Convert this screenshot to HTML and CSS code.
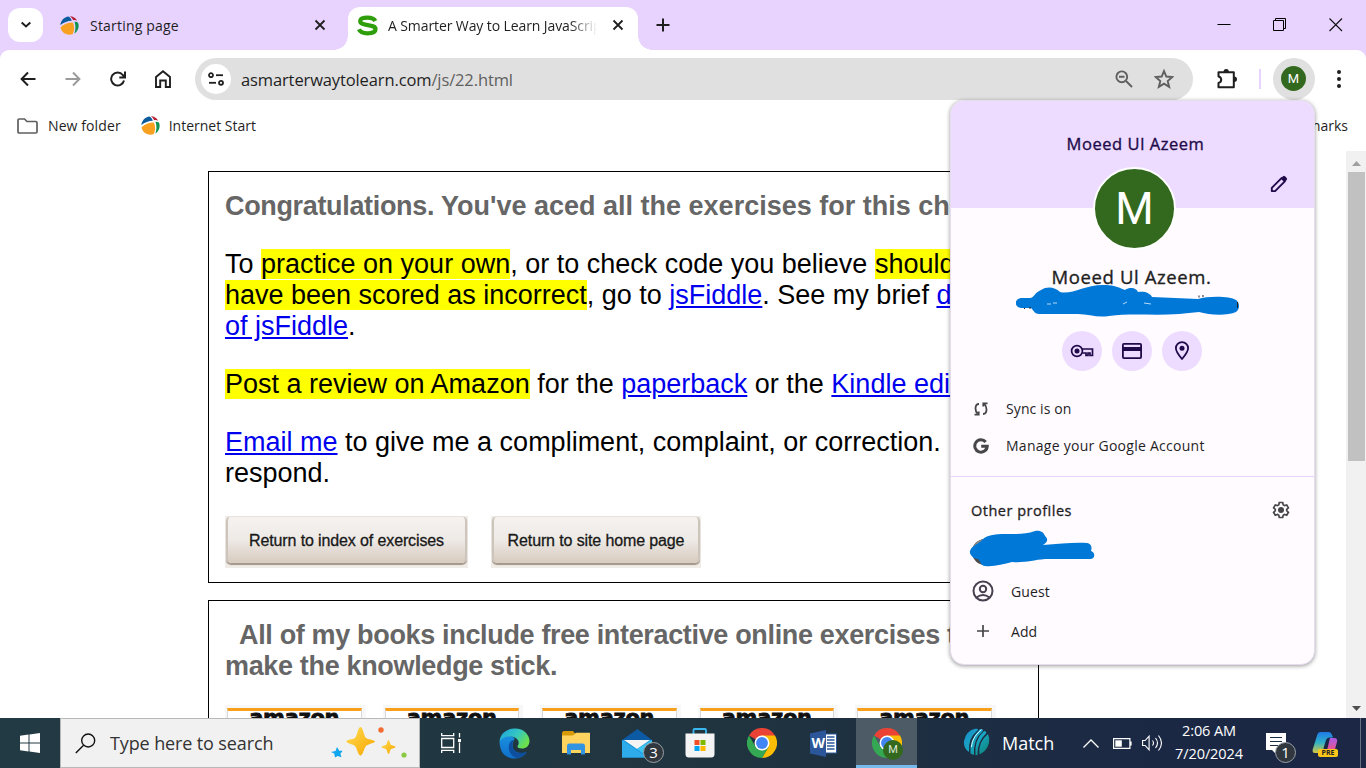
FILE: index.html
```html
<!DOCTYPE html>
<html lang="en">
<head>
<meta charset="utf-8">
<title>A Smarter Way to Learn JavaScript</title>
<link rel="stylesheet" href="styles.css">
</head>
<body>
<svg class="defs" width="0" height="0">
  <defs>
    <symbol id="ball" viewBox="0 0 18 18">
      <path fill="#0b5c9c" d="M.4 8.600C.6 4.500 4 .8 8 .4c1.700.9 2.700 2.200 3.200 4.200C7.500 4.700 3.500 6.300.4 8.600z"/>
      <path fill="#b81f35" d="M9.300.200c3 .1 5.500 1.600 7 4.200-1.300-.7-2.600-.8-3.900-.4C11.900 2.500 10.700 1.200 9.300.2z"/>
      <path fill="#0f9351" d="M13.700 5.500c1.300-.2 2.500.1 3.400.9 1.500 4-.2 8-3.500 10.200C14.900 13 15 9 13.700 5.500z"/>
      <path fill="#f8a01f" d="M.5 10.700C3.500 7.500 7.800 6 12.200 6.100c1.700 3.900 1.500 7.700-.3 11.200C6 19 1.300 15.600.5 10.700z"/>
    </symbol>
    <symbol id="chrome" viewBox="0 0 48 48">
      <path fill="#ea4335" d="M24 24 3.200 12A24 24 0 0 1 44.800 12z"/>
      <path fill="#fbbc04" d="M24 24V12h20.800A24 24 0 0 1 24 48L34.400 30z"/>
      <path fill="#34a853" d="M24 24 34.400 30 24 48A24 24 0 0 1 3.200 12L13.600 30z"/>
      <circle cx="24" cy="24" r="12" fill="#fff"/>
      <circle cx="24" cy="24" r="9.500" fill="#4285f4"/>
    </symbol>
    <linearGradient id="edgeA" x1="0" y1="0" x2="1" y2=".5"><stop offset="0" stop-color="#1ba1e2"/><stop offset=".6" stop-color="#36c8c0"/><stop offset="1" stop-color="#6be04c"/></linearGradient>
    <linearGradient id="edgeB" x1="0" y1="0" x2="0" y2="1"><stop offset="0" stop-color="#1a8fe0"/><stop offset="1" stop-color="#0f6fc9"/></linearGradient>
    <linearGradient id="gold" x1="0" y1="0" x2="1" y2="1"><stop offset="0" stop-color="#ffdc52"/><stop offset="1" stop-color="#f7a600"/></linearGradient>
    <linearGradient id="copA" x1="0" y1="0" x2="0" y2="1"><stop offset="0" stop-color="#1f78e8"/><stop offset=".5" stop-color="#2fb1c8"/><stop offset="1" stop-color="#d8c840"/></linearGradient>
    <linearGradient id="copB" x1="0" y1="0" x2="0" y2="1"><stop offset="0" stop-color="#a55de8"/><stop offset=".6" stop-color="#e0569c"/><stop offset="1" stop-color="#f79052"/></linearGradient>
    <linearGradient id="icc" x1="0" y1="0" x2="1" y2="1"><stop offset="0" stop-color="#1b8fd0"/><stop offset=".5" stop-color="#18a5c0"/><stop offset="1" stop-color="#0a7f6a"/></linearGradient>
  </defs>
</svg>

<div class="screen">
  <header class="tabstrip">
    <button class="tab-search"><svg width="12" height="8" viewBox="0 0 12 8"><path d="m1.700 1.500 4.300 4 4.300-4" fill="none" stroke="#1f1f1f" stroke-width="2"/></svg></button>
    <div class="tab tab-idle">
      <svg width="19" height="19"><use href="#ball"/></svg>
      <span class="ui tab-title">Starting page</span>
      <svg class="close" width="12" height="12" viewBox="0 0 12 12"><path d="m1.500 1.500 9 9m0-9-9 9" stroke="#1f1f1f" stroke-width="1.800"/></svg>
    </div>
    <div class="tab tab-active">
      <svg width="21" height="21" viewBox="0 0 21 21"><path d="M18.300 6C17 3.500 14 2.600 10.500 2.600 6 2.600 3.300 3.600 3.300 6.200c0 5.300 15.200 2.300 15.200 7.800 0 3-3.500 4.300-8 4.300-4.700 0-7.500-1.300-8.500-4" fill="none" stroke="#2f9e0b" stroke-width="4.300"/></svg>
      <span class="ui tab-title faded">A Smarter Way to Learn JavaScript</span>
      <svg class="close" width="12" height="12" viewBox="0 0 12 12"><path d="m1.500 1.500 9 9m0-9-9 9" stroke="#1f1f1f" stroke-width="1.800"/></svg>
    </div>
    <svg class="newtab" width="14" height="14" viewBox="0 0 14 14"><path d="M7 .5v13M.5 7h13" stroke="#1f1f1f" stroke-width="2"/></svg>
    <div class="window-controls">
      <svg width="14" height="14" viewBox="0 0 14 14"><path d="M.5 6.500h13" stroke="#000"/></svg>
      <svg width="14" height="14" viewBox="0 0 14 14"><path d="M.5 2.500h10v10H.5zM2.500 2.500v-2h10v10h-2" fill="none" stroke="#000"/></svg>
      <svg width="14" height="14" viewBox="0 0 14 14"><path d="m.5.5 12.500 12.500m0-12.500L.5 13" stroke="#111" stroke-width="1.100"/></svg>
    </div>
  </header>

  <nav class="toolbar">
    <div class="nav-icons">
      <svg width="16" height="16" viewBox="0 0 16 16"><path d="M15.500 8H2M8 1.500 1.600 8 8 14.500" fill="none" stroke="#1f1f1f" stroke-width="2"/></svg>
      <svg width="16" height="16" viewBox="0 0 16 16"><path d="M.5 8H14M8 1.500 14.400 8 8 14.500" fill="none" stroke="#9b9b9b" stroke-width="2"/></svg>
      <svg width="16" height="16" viewBox="0 0 16 16"><path d="M14 9.500A6.500 6.500 0 1 1 12.800 4L14.500 6M15 .5V6.500H9.300" fill="none" stroke="#1f1f1f" stroke-width="2"/></svg>
      <svg width="16" height="18" viewBox="0 0 16 18"><path d="M1 17V7l7-5.700L15 7v10h-4.200v-6.500H5.200V17z" fill="none" stroke="#1f1f1f" stroke-width="1.900"/></svg>
    </div>
    <div class="omnibox">
      <span class="site-info"><svg width="16" height="14" viewBox="0 0 16 14"><g fill="none" stroke="#1f1f1f" stroke-width="1.800"><circle cx="3" cy="3.200" r="2"/><path d="M8 3.200h7"/><circle cx="13" cy="10.800" r="2"/><path d="M1 10.800h7"/></g></svg></span>
      <span class="ui url">asmarterwaytolearn.com<span class="path">/js/22.html</span></span>
      <svg class="zoomout" width="18" height="18" viewBox="0 0 18 18"><g fill="none" stroke="#5f5f5f" stroke-width="1.900"><circle cx="6.800" cy="6.800" r="5.400"/><path d="m11 11 6 6M4 6.800h5.500"/></g></svg>
      <svg width="20" height="20" viewBox="0 0 20 20"><path d="m10 2 2.300 5.500 6 .5-4.600 4 1.500 5.900L10 14.700 4.800 17.900 6.300 12 1.700 8l6-.5z" fill="none" stroke="#5f5f5f" stroke-width="1.900"/></svg>
    </div>
    <svg class="puzzle" width="22" height="22" viewBox="0 0 22 22"><path d="M2.500 4.200h15.300V19.300H2.500v-4.300c3.600-1 3.600-5.500 0-6.500z" fill="none" stroke="#1f1f1f" stroke-width="2" stroke-linejoin="round"/><path d="M7.500 4a2.700 3 0 0 1 5.400 0zM18 8.500a3 2.700 0 0 1 0 5.400z" fill="#1f1f1f"/></svg>
    <span class="sep"></span>
    <span class="avatar-ring"><span class="avatar-small">M</span></span>
    <svg class="kebab" width="4" height="18" viewBox="0 0 4 18"><g fill="#1f1f1f"><circle cx="2" cy="2" r="2"/><circle cx="2" cy="9" r="2"/><circle cx="2" cy="16" r="2"/></g></svg>
  </nav>

  <div class="bookmarks ui">
    <svg width="21" height="16" viewBox="0 0 21 16"><path d="M1 13.500V2.200Q1 1 2.200 1H7.500L10 3.500h8.800Q20 3.500 20 4.700v9.100Q20 15 18.800 15H2.200Q1 15 1 13.500z" fill="none" stroke="#5f5f5f" stroke-width="1.700"/></svg>
    <span class="bm-folder">New folder</span>
    <svg width="19" height="19"><use href="#ball"/></svg>
    <span class="bm-start">Internet Start</span>
    <span class="bm-all">All Bookmarks</span>
  </div>

  <div class="viewport">
    <main class="page">
      <section class="box first">
        <h2><span class="tight">Congratulations.</span> You've aced all the exercises for this chapter.</h2>
        <p>To <mark>practice on your own</mark>, or to check code you believe <mark>should</mark><br><mark>have been scored as incorrect</mark>, go to <a>jsFiddle</a>. See my brief <a>demo</a><br><a>of jsFiddle</a>.</p>
        <p><mark>Post a review on Amazon</mark> for the <a>paperback</a> or the <a>Kindle edition</a>.</p>
        <p><a>Email me</a> to give me a compliment, complaint, or correction. I'll<br>respond.</p>
        <div class="buttons">
          <div class="img-btn wide"><span>Return to index of exercises</span></div>
          <div class="img-btn"><span>Return to site home page</span></div>
        </div>
      </section>
      <section class="box second">
        <h2 class="tight"><span class="indent"></span>All of my books include free interactive online exercises to<br>make the knowledge stick.</h2>
        <div class="shops">
          <div class="shop"><b>amazon</b></div><div class="shop"><b>amazon</b></div><div class="shop"><b>amazon</b></div><div class="shop"><b>amazon</b></div><div class="shop"><b>amazon</b></div>
        </div>
      </section>
    </main>
    <div class="scrollbar">
      <svg width="9" height="5" viewBox="0 0 9 5"><path d="M4.500 0 9 5H0z" fill="#a0a0a0"/></svg>
      <span class="thumb"></span>
      <svg class="down" width="9" height="5" viewBox="0 0 9 5"><path d="M0 0h9L4.500 5z" fill="#505050"/></svg>
    </div>
  </div>

  <footer class="taskbar">
    <div class="start"><svg width="20" height="20" viewBox="0 0 20 20"><path fill="#fff" d="M0 2.800 8.500 1.600V9.500H0zM9.500 1.400 20 0v9.500H9.500zM0 10.500h8.500v7.900L0 17.200zM9.500 10.500H20V20L9.500 18.600z"/></svg></div>
    <div class="search">
      <svg width="21" height="21" viewBox="0 0 21 21"><g fill="none" stroke="#111" stroke-width="1.400"><circle cx="13.200" cy="7.500" r="6.500"/><path d="M8.600 12.200.8 20"/></g></svg>
      <span class="ui">Type here to search</span>
      <svg class="sparkles" width="76" height="34" viewBox="0 0 76 34"><path fill="url(#gold)" d="M29.500 1C32 1 33 10.500 35 12s9 2 9 3.500S37 18 35 20s-3 9.500-5.500 9.500S26 22 24 20s-8.500-2.500-8.500-4.500S22 13.500 24 12 27 1 29.500 1z"/><path fill="url(#gold)" d="M57.500 14c1 0 1.500 4 2.300 4.700s4.700 1.300 4.700 2.300-4 1.600-4.700 2.300-1.300 4.700-2.300 4.700-1.600-4-2.300-4.700-4.700-1.300-4.700-2.300 4-1.600 4.700-2.300S56.500 14 57.500 14z"/><path fill="#12a6ee" d="m6 21 2.500 4 1.900-.6 1 1-2 2.100 1 3.700-3.700-1.200L4 31.500l-.8-4L0 26l4.500-1z"/><circle cx="50" cy="4" r="2.700" fill="#f26b31"/><circle cx="73" cy="29" r="2.600" fill="#8bc943"/></svg>
    </div>
    <div class="cell taskview"><svg width="20" height="20" viewBox="0 0 20 20"><g fill="none" stroke="#fff" stroke-width="1.300"><path d="M.7 5.500h12v9H.7zM.7 0v2.700h12V0M.7 20v-2.700h12V20M18.500 0v4.500m0 5V20"/></g><path fill="#fff" d="M17 6h3v3h-3z"/></svg></div>
    <div class="cell"><svg width="31" height="31" viewBox="0 0 31 31"><path fill="url(#edgeB)" d="M.5 14C1 22 4 30 15.500 30.500c5 0 9-2 12-6-6 2-14 0-14-7 0-4 2-5 2-7C12 6 3 7 .5 14z"/><path fill="#0d4f9e" d="M10 17c-1.500 7 3.500 12.500 9 13 3.500-.7 6.500-2.500 8.500-5.500-.2-.7-.7-.6-1.500-.3-6 1.800-12-.5-12.500-6.500C13 15 14 13 15 12c-2.500 0-4.500 2-5 5z"/><path fill="url(#edgeA)" d="M.5 14C1 5 8 .5 16 .5c9 0 14.500 6.500 14.500 12.500 0 5-3.500 7.500-7.500 7.500-3 0-4.500-1-4.500-2s1.200-1.500 1.200-3.500c0-4-4-6.500-8.700-6.500C6 8.500 2 10.500.5 14z"/></svg></div>
    <div class="cell"><svg width="28" height="24" viewBox="0 0 28 24"><path fill="#d99a08" d="M0 1.500 1.500 0H11l2.500 3H27v5H0z"/><path fill="#ffd560" d="M0 4.500h11L14 1.800h14V22H0z"/><path fill="#3293e0" d="M5 23.500V15q0-2.500 2.500-2.500h13Q23 12.500 23 15v8.500h-4V19H9v4.500z"/></svg></div>
    <div class="cell mail"><svg width="30" height="29" viewBox="0 0 30 29"><path fill="#0c59a4" d="M0 11 15.500 0 30 11z"/><path fill="#1694db" d="M0 11h30v17.500H0z"/><path fill="#f4f4f4" d="M2 11h26L15 20z"/><path fill="#2eabea" d="M0 11 26 28.500H0z"/><path fill="#3cc5f2" d="M30 11v17.500h-3.500L15 20z"/></svg><span class="badge">3</span></div>
    <div class="cell store"><svg width="30" height="30" viewBox="0 0 30 30"><path d="M8.500 6V2q0-1 1-1H20q1 0 1 1v4" fill="none" stroke="#38b8ee" stroke-width="1.800"/><path fill="#f4f4f4" d="M.5 5.500h29V26q0 3.500-3.500 3.500H4Q.5 29.500.5 26z"/><path fill="#f25022" d="M9.500 12h5v5h-5z"/><path fill="#7fba00" d="M15.500 12h5v5h-5z"/><path fill="#00a4ef" d="M9.500 18h5v5h-5z"/><path fill="#ffb900" d="M15.500 18h5v5h-5z"/></svg></div>
    <div class="cell"><svg width="30" height="30"><use href="#chrome"/></svg></div>
    <div class="cell"><svg width="28" height="27" viewBox="0 0 28 27"><path fill="#fff" stroke="#2b579a" stroke-width="1" d="M14 4h12.500v19H14z"/><path d="M17 7h7.500M17 10h7.500M17 13h7.500M17 16h7.500M17 19h7.500" stroke="#2b579a" stroke-width="1.500"/><path fill="#2b579a" d="M0 3.500 16 0v27L0 23.500z"/><text x="8.200" y="18" text-anchor="middle" class="word-w">W</text></svg></div>
    <div class="cell active"><svg width="30" height="30"><use href="#chrome"/></svg><span class="m-badge">M</span></div>
    <div class="tray">
      <svg class="icc" width="27" height="28" viewBox="0 0 27 28"><path fill="url(#icc)" d="M12 .8Q17 0 14 3 5 10 6 24 0 20 1 13 3 3 12 .8zM17 1Q22 1 19 4 10 11 11 27L7.500 25.500Q6 12 17 1zM21 3q3 0 2 2.500Q14 14 14.500 27L12.500 27.200Q11 12 21 3zM25 6q2 4 1 9-2 8-9.500 11.500Q15 14 25 6z"/><path d="M18.500 1.500C11 8 9 13 8.500 19" stroke="#dff" stroke-width="1" fill="none"/></svg>
      <span class="ui match">Match</span>
      <svg class="chev" width="16" height="9" viewBox="0 0 16 9"><path d="m.5 8.500 7.500-7.500 7.500 7.500" fill="none" stroke="#fff" stroke-width="1.300"/></svg>
      <svg class="battery" width="19" height="11" viewBox="0 0 19 11"><path d="M.6.6h16.300v9.800H.6zM18 3.500v4" fill="none" stroke="#fff" stroke-width="1.200"/><path fill="#fff" d="M2.300 2.300h6.500v6.400H2.300z"/></svg>
      <svg class="vol" width="21" height="18" viewBox="0 0 21 18"><g fill="none" stroke="#fff" stroke-width="1.100"><path d="M.6 6.500h2.500l4-4.300v13.600l-4-4.300H.6z"/><path d="M10.500 6.500q2 2.500 0 5M13.500 4q4 5 0 10M16.500 1.500q6 7.500 0 15"/></g></svg>
      <div class="clock ui"><span>2:06 AM</span><span>7/20/2024</span></div>
      <div class="note"><svg width="20" height="20" viewBox="0 0 20 20"><path fill="#fff" d="M0 0h20v17h-8l-3 3-3-3H0z"/><path d="M4 4.500h12M4 8.500h12M4 12.500h8" stroke="#1c2c44" stroke-width="1.200"/></svg><span class="badge">1</span></div>
      <div class="copilot"><svg width="26" height="23" viewBox="0 0 26 23"><path fill="url(#copA)" d="M5.500 2Q6.300 0 8.500 0H17q2 0 3 3l1 2.500h-4Q15 5.500 14 8l-3 10q-1 3-4 3H3Q0 21 .7 17.500z"/><path fill="url(#copB)" d="M18 6h4q4 0 3 4l-2.500 9q-1 3.500-4 3.500H11q3-1 4-4z"/></svg><span class="pre">PRE</span></div>
      <span class="peek"></span>
    </div>
  </footer>

  <aside class="profile">
    <div class="banner">
      <span class="ui pname">Moeed Ul Azeem</span>
      <svg class="pencil" width="18" height="18" viewBox="0 0 18 18"><path d="m1.800 12.800 9.700-9.700 3.300 3.300-9.700 9.700H1.800z" fill="none" stroke="#220a4a" stroke-width="1.900" stroke-linejoin="round"/><path d="m11 3.200 2-2q1-.8 2 0l1.700 1.700q.9 1 0 2l-2 2z" fill="#220a4a"/></svg>
      <span class="avatar-big">M</span>
    </div>
    <div class="ui full-name">Moeed Ul Azeem.</div>
    <svg class="scribble" width="224" height="34" viewBox="0 0 224 34"><path fill="#0078d7" d="M5 14h9c4 0 4-5 11-8 6-4 14-3 19 2 12 3 24-7 43-7 9 0 13 1 22 5 6-4 12-1 13 2 7-1 12 1 14 5l46 2c10-3 32-3 38 1 4 3 4 9 0 12-9 4-27 3-37 0l-20 2c-25 2-47-1-70 2-12 2-20-2-31-2H23c-4 0-5-3-8-6H5c-7-1-7-9 0-10z"/><path d="M31 20h4m2-1h4M107 20l4-2M128 19l7 1" stroke="#e8f4ff" stroke-width=".8"/><path d="M8 24.500h1m4-.5h2M183 11.500v2m4-2.500v2M221.500 18v6" stroke="#222"/></svg>
    <div class="chips">
      <span><svg width="24" height="14" viewBox="0 0 24 14"><g fill="none" stroke="#220a4a" stroke-width="1.700"><path d="M12 5h10.500v6.500H20V9h-2v2.500h-2V9h-3.800"/><circle cx="7" cy="7" r="5.400"/></g><circle cx="7" cy="7" r="2.500" fill="#220a4a"/></svg></span>
      <span><svg width="20" height="16" viewBox="0 0 20 16"><rect x=".9" y=".9" width="18.200" height="14.200" rx="1" fill="none" stroke="#220a4a" stroke-width="1.800"/><path fill="#220a4a" d="M1 4h18v4H1z"/></svg></span>
      <span><svg width="16" height="20" viewBox="0 0 16 20"><path d="M8 18C4.500 14 1.900 10.500 1.900 7.300a6.100 6.100 0 0 1 12.200 0C14.100 10.500 11.500 14 8 18z" fill="none" stroke="#220a4a" stroke-width="1.800"/><circle cx="8" cy="7.200" r="2.500" fill="#220a4a"/></svg></span>
    </div>
    <div class="row sync"><svg width="16" height="14" viewBox="0 0 16 14"><g fill="none" stroke="#474747" stroke-width="1.800"><path d="M6 2Q2.500 2 2.500 6.500q0 3 2 5M1.500 12.700h4.200V9.500M10 12q3.500 0 3.500-4.500 0-3-2-5.500M14.500 1.300h-4.200v3.200"/></g></svg><span class="ui">Sync is on</span></div>
    <div class="row manage"><svg width="16" height="16" viewBox="0 0 16 16"><path d="M12.700 3.900A6.200 6.200 0 1 0 14.200 8.300H8.200" fill="none" stroke="#474747" stroke-width="3"/></svg><span class="ui">Manage your Google Account</span></div>
    <div class="others"><span class="ui">Other profiles</span><svg width="18" height="18" viewBox="0 0 18 18"><path d="M7.300 1.500h3.400l.5 2.300 1.300.8 2.200-.7 1.700 2.900-1.700 1.600v1.300l1.700 1.600-1.700 2.900-2.200-.7-1.300.8-.5 2.200H7.300l-.5-2.200-1.300-.8-2.200.7-1.700-2.900 1.700-1.600V8.400L1.600 6.800l1.700-2.900 2.200.7 1.300-.8z" fill="none" stroke="#474747" stroke-width="1.700"/><circle cx="9" cy="9" r="3" fill="#474747"/></svg></div>
    <svg class="blob" width="126" height="38" viewBox="0 0 126 38"><circle cx="16" cy="22" r="13" fill="#4b4b4b"/><path d="M4 17Q8 10 15 9v8z" fill="#8d8d86"/><path fill="#0078d7" d="M1 21c2-6 9-7 12-11 5-6 17-6 28-6 9 0 17 0 25-3 6-1 9 2 10 5 4 4 2 6-2 9 16-1 32-3 44-2 5 1 5 5 4 8 5 2 4 8-1 8H76c-12 1-20 4-33 3-9 2-18 5-27 4-4 0-4-4-7-7-4 0-9-4-8-8z"/></svg>
    <div class="row guest"><svg width="22" height="22" viewBox="0 0 22 22"><g fill="none" stroke="#474250" stroke-width="2"><circle cx="11" cy="11" r="9.500"/><circle cx="11" cy="9" r="3.200"/><path d="M4.500 17.500q6.500-5 13 0"/></g></svg><span class="ui">Guest</span></div>
    <div class="row guest add"><svg width="22" height="12" viewBox="0 0 22 12"><path d="M11 0v12M5 6h12" stroke="#474747" stroke-width="1.700"/></svg><span class="ui">Add</span></div>
  </aside>
</div>
</body>
</html>
```
FILE: styles.css
```css
* { box-sizing: border-box; }
body { margin: 0; overflow: hidden; }
svg { display: block; flex: none; }
.defs { position: absolute; }
.ui { font-family: "Open Sans", "Noto Sans", sans-serif; white-space: nowrap; }
.screen { position: relative; width: 1366px; height: 768px; display: flex; flex-direction: column; background: #e8d3ff; overflow: hidden; }

/* tab strip */
.tabstrip { height: 50px; flex: none; display: flex; align-items: flex-start; background: #e8d3ff; padding-left: 8px; }
.tab-search { width: 35px; height: 34px; margin-top: 8px; border: 0; border-radius: 12px; background: #fff; padding: 0; display: flex; align-items: center; justify-content: center; }
.tab { height: 43px; display: flex; align-items: center; margin-top: 7px; padding-bottom: 7px; }
.tab-idle { width: 305px; padding-left: 17px; padding-right: 22px; }
.tab-idle .tab-title { margin-left: 11px; }
.tab-idle .tab-title { letter-spacing: .2px; }
.tab-title { font-size: 14px; letter-spacing: -.1px; color: #1f1f1f; line-height: 20px; padding-top: 1px; }
.close { margin-left: auto; }
.tab-active { position: relative; width: 290px; background: #fff; border-radius: 12px 12px 0 0; padding-left: 9px; padding-right: 14px; }
.tab-active::before, .tab-active::after { content: ""; position: absolute; bottom: 0; width: 14px; height: 14px; }
.tab-active::before { left: -14px; background: radial-gradient(circle at 0 0, #e8d3ff 13.500px, #fff 14px); }
.tab-active::after { right: -14px; background: radial-gradient(circle at 100% 0, #e8d3ff 13.500px, #fff 14px); }
.faded { width: 209px; margin-left: 10px; overflow: hidden; -webkit-mask-image: linear-gradient(90deg, #000 182px, transparent 209px); mask-image: linear-gradient(90deg, #000 182px, transparent 209px); }
.newtab { margin: 18px 0 0 18px; }
.window-controls { margin-left: auto; display: flex; gap: 42px; padding: 18px 23px 0 0; }

/* toolbar */
.toolbar { height: 58px; flex: none; display: flex; align-items: center; padding: 0 25px 0 20px; background: #fff; border-radius: 9px 9px 0 0; }
.nav-icons { display: flex; gap: 29px; align-items: center; width: 175px; }
.omnibox { width: 998px; height: 42px; border-radius: 21px; background: #e0e0e0; display: flex; align-items: center; padding: 0 19px 0 6px; }
.site-info { width: 30px; height: 30px; border-radius: 50%; background: #fff; display: flex; align-items: center; justify-content: center; }
.url { font-size: 16.500px; margin-left: 10px; color: #1f1f1f; letter-spacing: -.12px; }
.path { color: #5f5f5f; }
.zoomout { margin-left: auto; margin-right: 21px; }
.puzzle { margin-left: 23px; }
.sep { width: 2px; height: 20px; background: #e8d3ff; margin: 0 12px 0 21px; }
.avatar-ring { width: 42px; height: 42px; border-radius: 50%; background: #e0e0e0; display: flex; align-items: center; justify-content: center; padding: 0 1px 1px 0; }
.avatar-small { width: 25px; height: 25px; border-radius: 50%; background: #33691e; color: #fff; font: 400 13px/26px Roboto, sans-serif; text-align: center; }
.kebab { margin-left: 22px; }
.bookmarks { height: 43px; flex: none; display: flex; align-items: center; padding: 0 18px 8px 17px; font-size: 14px; color: #1f1f1f; background: #fff; }
.bm-folder { margin: 0 20px 0 10px; letter-spacing: .1px; }
.bm-start { margin-left: 9px; }
.bm-all { margin-left: auto; }

/* page */
.viewport { height: 567px; display: flex; overflow: hidden; background: #fff; flex: none; }
.page { width: 1346px; flex: none; padding: 20px 0 0 208px; font: 27px/31px "Liberation Sans", Arial, sans-serif; color: #000; }
.box { width: 831px; border: 1px solid #000; padding: 19px 16px 0; white-space: nowrap; overflow: hidden; }
.first { height: 412px; margin-bottom: 17px; }
.second { height: 300px; }
h2 { margin: 0 0 27px; font-size: 27px; line-height: 31px; color: #666; }
.second h2 { margin-bottom: 23px; }
.tight { letter-spacing: -.34px; }
p { margin: 0 0 27px; }
mark { background: #ff0; color: #000; }
a { color: #0000ee; text-decoration: underline; }
.buttons { display: flex; gap: 23px; }
.img-btn { width: 210px; height: 52px; background: #f0ece8; padding: 0 1px 4px; }
.img-btn span { display: block; height: 47px; border: 2px solid #cdc4bb; border-top: 1px solid #e8e3de; border-bottom: 1px solid #d9cfc6; border-radius: 5px; background: linear-gradient(#f5f2f0, #eeeae6 50%, #d8ccc0); box-shadow: 0 2px 1px #a49688; text-align: center; font-size: 16px; letter-spacing: -.12px; line-height: 48px; color: #181818; -webkit-text-stroke: .3px #181818; }
.img-btn.wide { width: 243px; }
.indent { display: inline-block; width: 14px; }
.shops { display: flex; gap: 17px; }
.shop { width: 140.500px; height: 60px; flex: none; background: #f7f7f7; padding: 3px 4px 0 2px; }
.shop b { display: block; height: 50px; border: 1px solid #d8d8d8; border-top: 3px solid #f9a01b; background: #fff; font-family: "DejaVu Sans", sans-serif; font-size: 21px; letter-spacing: -.3px; line-height: 11px; padding-top: 2px; text-align: center; color: #111; -webkit-text-stroke: .8px #111; }
.scrollbar { width: 20px; background: #f1f1f1; display: flex; flex-direction: column; align-items: center; padding: 10px 0 7px 1px; }
.thumb { width: 17px; height: 289px; background: #c1c1c1; margin-top: 6px; }
.down { margin-top: auto; }

/* taskbar */
.taskbar { height: 50px; flex: none; display: flex; background: linear-gradient(90deg, #223a43 0, #20353f 50%, #1b2844 85%, #1b2744); color: #fff; }
.start { width: 60px; display: flex; align-items: center; justify-content: center; }
.search { width: 360px; background: #f1f1f1; border: 1px solid #b8b8b8; display: flex; align-items: center; padding: 0 12px 0 14px; color: #333; font-size: 18px; }
.search span { margin-left: 14px; letter-spacing: -.12px; padding-bottom: 1px; }
.sparkles { margin-left: auto; }
.cell { position: relative; width: 62px; display: flex; align-items: center; justify-content: center; }
.taskview { width: 61px; margin-right: 2px; }
.mail svg { margin-right: 2px; }
.badge { position: absolute; width: 21px; height: 21px; border-radius: 50%; background: #30373f; border: 1px solid #9aa0a5; font: 15px/19px "Open Sans", sans-serif; text-align: center; }
.mail .badge { left: 36px; top: 24px; }
.word-w { font: bold 14px "Open Sans", sans-serif; fill: #fff; }
.active { width: 61px; margin-left: 1px; background: #4c5b66; border-bottom: 3px solid #76b9ed; padding-top: 3px; }
.m-badge { position: absolute; left: 27px; top: 22px; width: 20px; height: 20px; border-radius: 50%; background: #33691e; color: #dfe8da; font: 11px/20px Roboto, sans-serif; text-align: center; }
.tray { flex: 1; display: flex; align-items: center; padding-left: 46px; }
.icc { margin-bottom: 2px; }
.match { width: 50px; margin-left: 12px; font-size: 18px; }
.chev { margin-left: 31px; }
.battery { margin-left: 14px; }
.vol { margin-left: 10px; }
.clock { width: 70px; margin-left: 11px; display: flex; flex-direction: column; align-items: center; font-size: 14.500px; line-height: 23px; letter-spacing: -.1px; padding-bottom: 2px; }
.note { position: relative; margin-left: 22px; }
.note .badge { left: 9px; top: 9px; }
.copilot { position: relative; margin-left: 26px; }
.pre { position: absolute; left: 6px; top: 17px; width: 20px; height: 8px; border-radius: 2px; background: #ffc61a; color: #222; font: bold 7px/8px "Open Sans", sans-serif; text-align: center; }
.peek { width: 1px; height: 50px; margin-left: auto; margin-right: 5px; background: #667080; }

/* profile menu */
.profile { position: absolute; left: 950px; top: 100px; width: 365px; height: 565px; border-radius: 14px; border: 1px solid #e5dcee; background: #fffbff; box-shadow: 0 1px 4px rgba(0, 0, 0, .4); color: #1f1f1f; overflow: visible; }
.banner { position: relative; height: 107px; background: #eddcff; border-radius: 13px 13px 0 0; text-align: center; padding: 30px 0 0 6px; color: #220a4a; }
.pname { font-size: 16.500px; line-height: 26px; letter-spacing: .55px; -webkit-text-stroke: .35px #220a4a; display: block; }
.pencil { position: absolute; left: 319px; top: 74px; }
.avatar-big { position: absolute; left: 142px; top: 66px; width: 83px; height: 83px; border: 2px solid #fff; border-radius: 50%; background: #33691e; color: #fff; font: 44px/80px Roboto, sans-serif; }
.full-name { margin-top: 56px; text-align: center; font-size: 18.500px; line-height: 26px; letter-spacing: .6px; -webkit-text-stroke: .35px #1f1f1f; padding-right: 2px; }
.scribble { margin: -6px 0 0 65px; }
.chips { display: flex; gap: 10px; margin: 13px 0 0 111px; }
.chips span { width: 40px; height: 40px; border-radius: 50%; background: #eddcff; display: flex; align-items: center; justify-content: center; }
.row { display: flex; align-items: center; height: 37px; padding-left: 22px; font-size: 14px; }
.row span { margin-left: 17px; letter-spacing: .1px; }
.sync { margin-top: 19px; }
.manage span { letter-spacing: .27px; }
.others { margin-top: 12px; height: 68px; border-top: 1px solid #e8d3ff; display: flex; justify-content: space-between; align-items: center; padding: 0 24px 1px 20px; font-size: 14.500px; letter-spacing: .5px; -webkit-text-stroke: .3px #1f1f1f; }
.blob { margin: -14px 0 0 18px; }
.guest { height: 40px; margin-top: 3px; padding-left: 21px; }
.add { margin-top: 0; }
```
